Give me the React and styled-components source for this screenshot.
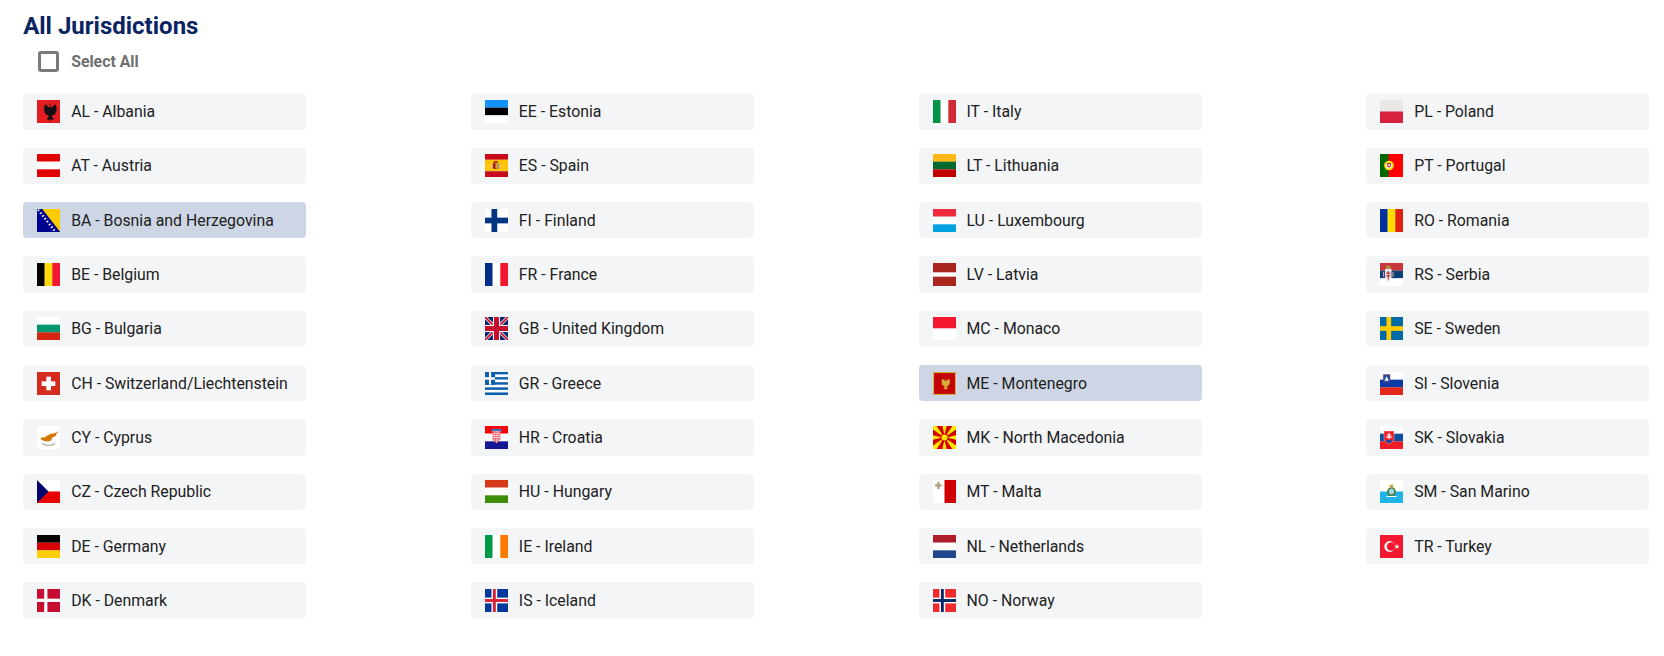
import React from "react";
import styled, { createGlobalStyle } from "styled-components";

const Global = createGlobalStyle`
  html, body { margin: 0; padding: 0; background: #fff; }
  body { font-family: Roboto, "Noto Sans", sans-serif; }
`;

const Page = styled.main`
  width: 1664px;
  height: 656px;
  box-sizing: border-box;
  padding: 11px 0 0 23.15px;
  overflow: hidden;
`;
const Title = styled.h2`
  margin: 0;
  font-size: 24px;
  line-height: 30px;
  font-weight: 700;
  color: #0a2463;
`;
const SelectRow = styled.label`
  display: flex;
  align-items: center;
  height: 21px;
  margin: 10px 0 0 15px;
  gap: 12px;
`;
const Box = styled.span`
  width: 21px;
  height: 21px;
  box-sizing: border-box;
  border: 3px solid #7a7a7a;
  border-radius: 3px;
`;
const SelectText = styled.span`
  font-size: 15.84px;
  font-weight: 700;
  color: #6f6f6f;
`;
const Grid = styled.ul`
  list-style: none;
  margin: 21.4px 0 0;
  padding: 0;
  display: grid;
  grid-auto-flow: column;
  grid-template-rows: repeat(10, 36.33px);
  grid-template-columns: repeat(4, 283px);
  row-gap: 18px;
  column-gap: 164.7px;
`;
const Chip = styled.li`
  display: flex;
  align-items: center;
  gap: 11px;
  padding-left: 14px;
  border-radius: 4px;
  background: ${(p) => (p.$active ? "#ced6e5" : "#f4f5f7")};
`;
const Label = styled.span`
  font-size: 15.84px;
  color: #212121;
  white-space: nowrap;
`;
const FlagSvg = styled.svg`
  width: 23px;
  height: 23px;
  flex: none;
  display: block;
`;

const H = (...c) => {
  const h = 64 / c.length;
  return c.map((f, i) => <rect key={i} x="0" y={i * h} width="64" height={h + 0.2} fill={f} />);
};
const V = (...c) => {
  const w = 64 / c.length;
  return c.map((f, i) => <rect key={i} x={i * w} y="0" width={w + 0.2} height="64" fill={f} />);
};
const Cross = (bg, fg) => (
  <>
    <rect width="64" height="64" fill={bg} />
    <rect x="18" width="16" height="64" fill={fg} />
    <rect y="24" width="64" height="16" fill={fg} />
  </>
);
const Shield = ({ x, y, w, h, fill, stroke }) => (
  <path
    d={`M${x} ${y}h${w}v${h * 0.6}c0 ${h * 0.25} -${w * 0.3} ${h * 0.3} -${w / 2} ${h * 0.4}c-${w * 0.2} -${h * 0.1} -${w / 2} -${h * 0.15} -${w / 2} -${h * 0.4}z`}
    fill={fill}
    stroke={stroke}
  />
);
const Eagle = ({ fill }) => (
  <path
    fill={fill}
    d="M32 10l3 4 3-2-1 6 4 1-3 5 8-9 7-3-1 6 3-1-2 6 3 0-3 5 3 1-4 4 2 2-5 3 1 2-6 2-3 4 4 5 4 3-4-1-3 3-2-3-3 7-3-7-2 3-3-3-4 1 4-3 4-5-3-4-6-2 1-2-5-3 2-2-4-4 3-1-3-5 3 0-2-6 3 1-1-6 7 3 8 9-3-5 4-1-1-6 3 2z"
  />
);

const flags = {
  AL: (<><rect width="64" height="64" fill="#e41e20" /><Eagle fill="#111" /></>),
  AT: H("#e00000", "#fff", "#e00000"),
  BA: (<>
    <rect width="64" height="64" fill="#00058f" />
    <path d="M14 0h50v64z" fill="#fecb00" />
    <path d="M0 0h14L64 64H50L0 0z" fill="#00058f" />
    <path d="M3 2l47 60" stroke="#fff" strokeWidth="6" strokeDasharray="4 6" fill="none" />
  </>),
  BE: V("#000", "#ffd90c", "#f31830"),
  BG: H("#fff", "#00966e", "#d62612"),
  CH: (<>
    <rect width="64" height="64" fill="#d52b1e" />
    <rect x="26" y="13" width="13" height="38" fill="#fff" />
    <rect x="13" y="26" width="38" height="13" fill="#fff" />
  </>),
  CY: (<>
    <rect width="64" height="64" fill="#fff" />
    <path d="M62 14l-13 6-12 2-9 5-6 4-12 2 2 5 9 4 10 1 8-3 3-7 10-5 3-8z" fill="#d57800" />
    <path d="M14 48c8 7 26 9 36 0" fill="none" stroke="#a8b39a" strokeWidth="3" />
  </>),
  CZ: (<>
    <rect width="64" height="32" fill="#fff" />
    <rect y="32" width="64" height="32" fill="#e80000" />
    <path d="M0 0l32 32L0 64z" fill="#00006f" />
  </>),
  DE: H("#000", "#d90000", "#ffce00"),
  DK: (<>
    <rect width="64" height="64" fill="#c60c30" />
    <rect x="20" width="9" height="64" fill="#fff" />
    <rect y="27" width="64" height="9" fill="#fff" />
  </>),
  EE: H("#1291ff", "#000", "#fff"),
  ES: (<>
    {H("#c60b1e", "#ffc400", "#ffc400", "#c60b1e")}
    <rect x="22" y="24" width="16" height="18" rx="4" fill="#ad1519" />
    <rect x="29" y="25" width="9" height="16" fill="#c8a03c" />
    <rect x="18" y="27" width="3" height="14" fill="#bbb" />
    <rect x="39" y="27" width="3" height="14" fill="#bbb" />
    <rect x="24" y="20" width="12" height="4" fill="#ad1519" />
  </>),
  FI: Cross("#fff", "#003580"),
  FR: V("#002e87", "#fff", "#f31830"),
  GB: (<>
    <rect width="64" height="64" fill="#012169" />
    <path d="M0 0l64 64M64 0L0 64" stroke="#fff" strokeWidth="9" />
    <path d="M0 0l64 64M64 0L0 64" stroke="#c8102e" strokeWidth="5" />
    <rect x="22" width="20" height="64" fill="#fff" />
    <rect y="22" width="64" height="20" fill="#fff" />
    <rect x="25" width="14" height="64" fill="#c8102e" />
    <rect y="25" width="64" height="14" fill="#c8102e" />
  </>),
  GR: (<>
    {H("#0d5eaf", "#fff", "#0d5eaf", "#fff", "#0d5eaf", "#fff", "#0d5eaf", "#fff", "#0d5eaf")}
    <rect width="28" height="36" fill="#0d5eaf" />
    <rect x="11" width="6" height="35.5" fill="#fff" />
    <rect y="14.5" width="28" height="7" fill="#fff" />
  </>),
  HR: (<>
    {H("#f00", "#fff", "#171796")}
    <rect x="18" y="8" width="28" height="8" fill="#3f73b4" />
    <Shield x={21} y={14} w={22} h={34} fill="#e8606a" />
    <path d="M21 20h22M21 26h22M21 32h22M25 39h14M26 14v30M32 14v34M38 14v30" stroke="#fff" strokeWidth="2.4" strokeDasharray="3 3" />
  </>),
  HU: H("#d6391a", "#fff", "#3d8e06"),
  IE: V("#009a49", "#fff", "#ff7900"),
  IS: (<>
    <rect width="64" height="64" fill="#02389c" />
    <rect x="18" width="16" height="64" fill="#fff" />
    <rect y="24" width="64" height="16" fill="#fff" />
    <rect x="22" width="8" height="64" fill="#dc1e35" />
    <rect y="28" width="64" height="8" fill="#dc1e35" />
  </>),
  IT: V("#009246", "#fff", "#ce2b37"),
  LT: H("#fdb913", "#006a2e", "#c10000"),
  LU: H("#ef2b3d", "#fff", "#00a3e0"),
  LV: (<>
    <rect width="64" height="64" fill="#a9261d" />
    <rect y="26" width="64" height="12" fill="#fff" />
  </>),
  MC: H("#f31830", "#fff"),
  ME: (<>
    <rect width="64" height="64" fill="#d3ae3b" />
    <rect x="3" y="3" width="58" height="58" fill="#c40308" />
    <g transform="translate(11 11) scale(.66)"><Eagle fill="#d3ae3b" /></g>
  </>),
  MK: (<>
    <rect width="64" height="64" fill="#d20000" />
    <path d="M26 0h12l-6 26zM26 64h12l-6-26zM0 26v12l26-6zM64 26v12l-26-6zM0 0h10l22 32L0 10zM64 0H54L32 32l32-22zM0 64h10l22-32L0 54zM64 64H54L32 32l32 22z" fill="#ffe600" />
    <circle cx="32" cy="32" r="11" fill="#d20000" />
    <circle cx="32" cy="32" r="8.5" fill="#ffe600" />
  </>),
  MT: (<>
    <rect width="64" height="64" fill="#d00000" />
    <rect width="32" height="64" fill="#fff" />
    <path d="M12 5h6v7h6v6h-6v7h-6v-7H6v-6h6z" fill="#b39c7c" />
  </>),
  NL: H("#ae1c28", "#fff", "#21468b"),
  NO: (<>
    <rect width="64" height="64" fill="#ef2b2d" />
    <rect x="18" width="16" height="64" fill="#fff" />
    <rect y="24" width="64" height="16" fill="#fff" />
    <rect x="22" width="8" height="64" fill="#002868" />
    <rect y="28" width="64" height="8" fill="#002868" />
  </>),
  PL: H("#e9e8e7", "#d7213f"),
  PT: (<>
    <rect width="64" height="64" fill="#f00" />
    <rect width="24" height="64" fill="#060" />
    <circle cx="25" cy="32" r="13.5" fill="#ffe000" />
    <circle cx="25" cy="32" r="8.5" fill="#fff" />
    <Shield x={20} y={25} w={10} h={13} fill="#d01a1a" />
    <rect x="23" y="28" width="4" height="6" fill="#fff" />
  </>),
  RO: V("#00319c", "#ffde00", "#de2110"),
  RS: (<>
    {H("#c6363c", "#0c4076", "#fff")}
    <rect x="16" y="7" width="14" height="10" fill="#b7893a" />
    <Shield x={14} y={17} w={18} h={38} fill="#eee" />
    <path d="M17 28h12M17 36h12M23 22v24" stroke="#c6363c" strokeWidth="3.5" />
    <path d="M10 24v14M36 24v14" stroke="#dba8a4" strokeWidth="3" />
  </>),
  SE: (<>
    <rect width="64" height="64" fill="#006aa7" />
    <rect x="18" width="13" height="64" fill="#fecc00" />
    <rect y="25.5" width="64" height="13" fill="#fecc00" />
  </>),
  SI: (<>
    {H("#fff", "#0a3aa8", "#e1281a")}
    <Shield x={9} y={7} w={19} h={24} fill="#1d4f9e" stroke="#e1281a" />
    <path d="M18.5 12l6 12h-12z" fill="#fff" />
  </>),
  SK: (<>
    {H("#fff", "#0b4ea2", "#ee1c25")}
    <Shield x={11} y={14} w={28} h={36} fill="#ee1c25" stroke="#fff" />
    <path d="M25 19v18M19 25h12M17 31h16" stroke="#fff" strokeWidth="3" />
    <path d="M15 43c5-5 15-5 20 0l-10 6z" fill="#0b4ea2" />
  </>),
  SM: (<>
    {H("#fff", "#1eb4ea")}
    <ellipse cx="32" cy="33" rx="12" ry="13" fill="#4c7a3a" />
    <ellipse cx="32" cy="32" rx="7" ry="8.5" fill="#9ed4e8" />
    <rect x="27" y="13" width="10" height="7" fill="#c7a640" />
    <path d="M18 46h28" stroke="#fff" strokeWidth="3" />
  </>),
  TR: (<>
    <rect width="64" height="64" fill="#f31830" />
    <circle cx="27" cy="32" r="15" fill="#fff" />
    <circle cx="31" cy="32" r="12" fill="#f31830" />
    <path d="M47 24.5l1.8 5.5h5.7l-4.6 3.4 1.8 5.5-4.7-3.4-4.6 3.4 1.8-5.5-4.7-3.4h5.8z" fill="#fff" />
  </>),
};

const rows = [
  ["AL", "Albania"], ["AT", "Austria"], ["BA", "Bosnia and Herzegovina", true], ["BE", "Belgium"], ["BG", "Bulgaria"],
  ["CH", "Switzerland/Liechtenstein"], ["CY", "Cyprus"], ["CZ", "Czech Republic"], ["DE", "Germany"], ["DK", "Denmark"],
  ["EE", "Estonia"], ["ES", "Spain"], ["FI", "Finland"], ["FR", "France"], ["GB", "United Kingdom"],
  ["GR", "Greece"], ["HR", "Croatia"], ["HU", "Hungary"], ["IE", "Ireland"], ["IS", "Iceland"],
  ["IT", "Italy"], ["LT", "Lithuania"], ["LU", "Luxembourg"], ["LV", "Latvia"], ["MC", "Monaco"],
  ["ME", "Montenegro", true], ["MK", "North Macedonia"], ["MT", "Malta"], ["NL", "Netherlands"], ["NO", "Norway"],
  ["PL", "Poland"], ["PT", "Portugal"], ["RO", "Romania"], ["RS", "Serbia"], ["SE", "Sweden"],
  ["SI", "Slovenia"], ["SK", "Slovakia"], ["SM", "San Marino"], ["TR", "Turkey"],
];

export default function App() {
  return (
    <Page>
      <Global />
      <Title>All Jurisdictions</Title>
      <SelectRow>
        <Box />
        <SelectText>Select All</SelectText>
      </SelectRow>
      <Grid>
        {rows.map(([code, name, active]) => (
          <Chip key={code} $active={active}>
            <FlagSvg viewBox="0 0 64 64">{flags[code]}</FlagSvg>
            <Label>{code} - {name}</Label>
          </Chip>
        ))}
      </Grid>
    </Page>
  );
}
